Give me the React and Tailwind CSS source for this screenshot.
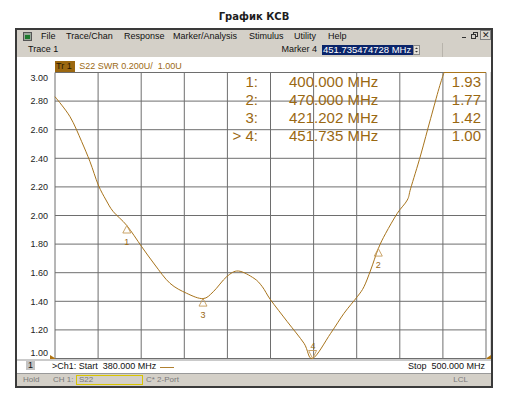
import React from "react";

const TRACE = "#a8741c";
const TEXT = "#9a6812";

// trace samples read off the screen, converted to chart coordinates below
const raw = [
  [55, 96.7], [70, 116.7], [81.7, 141.7], [90, 161.7], [98.3, 185], [106, 200],
  [113.3, 211.7], [126.8, 225.5], [141.7, 246.7], [155, 265], [170, 283.3],
  [186.7, 293.3], [203, 298.6], [213.3, 291.7], [226.7, 276.7], [238.3, 271],
  [254, 278.3], [262.3, 286.7], [270.7, 300], [287.3, 321.7], [304, 343.3],
  [312.6, 358.5], [330.7, 333.3], [344, 313.3], [357.3, 296.7], [364, 286.7],
  [370.7, 270], [378.3, 248.6], [385.7, 233.3], [397.3, 213.3], [407.3, 200],
  [410.7, 188.3], [420.7, 155], [430.7, 118.3], [439, 88.3], [444, 72.5],
];

const pts = raw.map(([x, y]) => [x - 17, y - 72]);

function smoothPath(p) {
  let d = `M${p[0][0]},${p[0][1]}`;
  for (let i = 0; i < p.length - 1; i++) {
    const p0 = p[i - 1] || p[i];
    const p1 = p[i];
    const p2 = p[i + 1];
    const p3 = p[i + 2] || p2;
    const c1x = p1[0] + (p2[0] - p0[0]) / 6;
    const c1y = p1[1] + (p2[1] - p0[1]) / 6;
    const c2x = p2[0] - (p3[0] - p1[0]) / 6;
    const c2y = p2[1] - (p3[1] - p1[1]) / 6;
    d += ` C${c1x.toFixed(1)},${c1y.toFixed(1)} ${c2x.toFixed(1)},${c2y.toFixed(1)} ${p2[0]},${p2[1]}`;
  }
  return d;
}

const menu = [
  ["File", 25],
  ["Trace/Chan", 58],
  ["Response", 49],
  ["Marker/Analysis", 76],
  ["Stimulus", 45],
  ["Utility", 34],
  ["Help", 40],
];

const readout = [
  ["1:", "400.000 MHz", "1.93"],
  ["2:", "470.000 MHz", "1.77"],
  ["3:", "421.202 MHz", "1.42"],
  ["> 4:", "451.735 MHz", "1.00"],
];

const yLabels = ["3.00", "2.80", "2.60", "2.40", "2.20", "2.00", "1.80", "1.60", "1.40", "1.20", "1.00"];

// markers: x, y on screen, label
const markers = [
  [126.8, 225.5, "1"],
  [378.3, 248.6, "2"],
  [203, 298.6, "3"],
];

function Chart() {
  const gx = (i) => 38 + i * 43.1;
  const gy = (i) => 0.5 + i * 28.6;
  return (
    <svg width="474" height="287" className="block">
      {Array.from({ length: 11 }).map((_, i) => (
        <line key={"v" + i} x1={gx(i)} x2={gx(i)} y1="0.5" y2="286.5" stroke="#6e6e6e" strokeWidth="1" />
      ))}
      {Array.from({ length: 11 }).map((_, i) => (
        <line key={"h" + i} x1="38" x2="469" y1={gy(i)} y2={gy(i)} stroke="#6e6e6e" strokeWidth="1" />
      ))}
      <line x1="473.5" x2="473.5" y1="0" y2="287" stroke="#d8d8d8" strokeWidth="1" />
      {yLabels.map((t, i) => {
        let cy = gy(i);
        if (i === 0) cy = 6;
        if (i === 10) cy = 281;
        return (
          <text key={t} x="31" y={cy + 3.3} textAnchor="end" fontSize="9" fill="#222" fontFamily="'Liberation Sans', Arial, sans-serif">
            {t}
          </text>
        );
      })}
      <path d={smoothPath(pts)} fill="none" stroke={TRACE} strokeWidth="1" />
      <line x1="427" x2="469" y1="0.5" y2="0.5" stroke={TRACE} strokeWidth="1" />
      {markers.map(([x, y, n]) => {
        const sx = x - 17;
        const sy = y - 72;
        return (
          <g key={n}>
            <polygon points={`${sx},${sy} ${sx - 4},${sy + 7.5} ${sx + 4},${sy + 7.5}`} fill="none" stroke="#c49a58" strokeWidth="0.9" />
            <text x={sx} y={sy + 19} textAnchor="middle" fontSize="9" fill={TEXT} fontFamily="'Liberation Sans', Arial, sans-serif">
              {n}
            </text>
          </g>
        );
      })}
      <polygon points="291.6,278.5 299.6,278.5 295.6,286.5" fill="none" stroke="#c49a58" strokeWidth="0.9" />
      <text x="296" y="276.5" textAnchor="middle" fontSize="9" fill={TEXT} fontFamily="'Liberation Sans', Arial, sans-serif">
        4
      </text>
      <polygon points="33,283 38.5,286.5 33,290" fill="#b07410" />
      <polygon points="474,283 469,286.5 474,290" fill="#b07410" />
    </svg>
  );
}

export default function App() {
  return (
    <div className="w-[508px] h-[404px] bg-white font-['Liberation_Sans',Arial,sans-serif]">
      <div className="h-[28px] flex items-center justify-center pt-[4px]">
        <h1 className="text-[10px] font-bold text-[#1e1e1e] font-['DejaVu_Sans',sans-serif]">График КСВ</h1>
      </div>

      <div className="ml-[15px] w-[478px] border-2 border-[#3a3a3a] bg-[#d4d0c8] flex flex-col">
        {/* menu bar */}
        <div className="h-[13px] flex items-center text-[9px] text-[#111] relative">
          <div className="ml-[6px] w-[9px] h-[9px] border border-[#555] bg-[#9aa89a] flex items-center justify-center">
            <div className="w-[5px] h-[4px] bg-[#1d7a2e]" />
          </div>
          <div className="ml-[9px] flex">
            {menu.map(([m, w]) => (
              <span key={m} style={{ width: w }} className="leading-[13px]">
                {m}
              </span>
            ))}
          </div>
          <div className="ml-auto self-start flex">
            <div className="w-[11px] h-[10px] flex items-end justify-center pb-[2px]">
              <div className="w-[4px] h-[1px] bg-[#333]" />
            </div>
            <div className="w-[11px] h-[10px] flex items-center justify-center">
              <svg width="7" height="7">
                <rect x="2.5" y="0.5" width="4" height="4" fill="none" stroke="#333" />
                <rect x="0.5" y="2.5" width="4" height="4" fill="#d4d0c8" stroke="#333" />
              </svg>
            </div>
            <div className="w-[11px] h-[10px] border border-[#808080] bg-[#dcd8d0] flex items-center justify-center text-[9px] leading-none text-[#222]">
              ✕
            </div>
          </div>
        </div>

        {/* trace row */}
        <div className="h-[14px] flex items-center text-[9px] text-[#111]">
          <span className="pl-[11px]">Trace 1</span>
          <div className="flex-1" />
          <span>Marker 4</span>
          <div className="ml-[5px] w-[91px] h-[10px] bg-[#0a246a] text-white text-[9.5px] leading-[10px] pl-[1px] whitespace-nowrap overflow-hidden">
            451.735474728 MHz
          </div>
          <div className="w-[7px] h-[10px] flex flex-col border border-[#8a8a8a] bg-[#e4e0d8]">
            <svg width="5" height="4" className="block">
              <polygon points="1,3 4,3 2.5,1.5" fill="#333" />
            </svg>
            <svg width="5" height="4" className="block">
              <polygon points="1,1 4,1 2.5,2.5" fill="#333" />
            </svg>
          </div>
          <div className="w-[71px] h-full pl-[22px]">
            <div className="h-full border-l border-[#b8b4ac]" />
          </div>
        </div>

        {/* plot */}
        <div className="relative bg-white h-[302px] flex flex-col">
          <div className="h-[15px] pt-[4px] pl-[38px] flex items-start text-[9px] leading-[11px]">
            <span className="h-[11px] px-[1px] bg-[#9c6810] text-[#2a1800] whitespace-pre">Tr 1 </span>
            <span className="ml-[4px] text-[#9c6a14] whitespace-pre">S22 SWR 0.200U/  1.00U</span>
          </div>
          <Chart />
          <div className="absolute left-[191px] top-[15.5px] text-[15px] leading-[18.3px]" style={{ color: TEXT }}>
            {readout.map(([a, f, v]) => (
              <div key={a} className="flex whitespace-pre">
                <span className="w-[50px] text-right">{a}</span>
                <span className="ml-[31px] w-[95px]">{f}</span>
                <span className="w-[97px] text-right">{v}</span>
              </div>
            ))}
          </div>
        </div>

        {/* bottom row */}
        <div className="h-[14px] bg-white border-t-2 border-[#cacaca] flex items-start text-[9px] text-[#111]">
          <div className="ml-[9px] w-[9px] h-[9px] bg-[#c4c4c4] flex items-center justify-center leading-none">1</div>
          <span className="ml-[17px] leading-[11px] whitespace-pre">&gt;Ch1: Start  380.000 MHz</span>
          <div className="ml-[4px] mt-[6px] w-[14px] h-[1px] bg-[#b08030]" />
          <div className="flex-1" />
          <span className="pr-[6px] leading-[11px] whitespace-pre">Stop  500.000 MHz</span>
        </div>

        {/* status bar */}
        <div className="h-[13px] border-t border-[#9a9a9a] flex items-center text-[8px] text-[#7a7a7a]">
          <span className="ml-[6px] w-[30px]">Hold</span>
          <span className="w-[23px]">CH 1:</span>
          <div className="w-[67px] h-[10px] border border-[#d8c400] pl-[2px] leading-[8px]">S22</div>
          <span className="ml-[3px]">C* 2-Port</span>
          <div className="flex-1" />
          <span className="mr-[23px]">LCL</span>
        </div>
      </div>
    </div>
  );
}
